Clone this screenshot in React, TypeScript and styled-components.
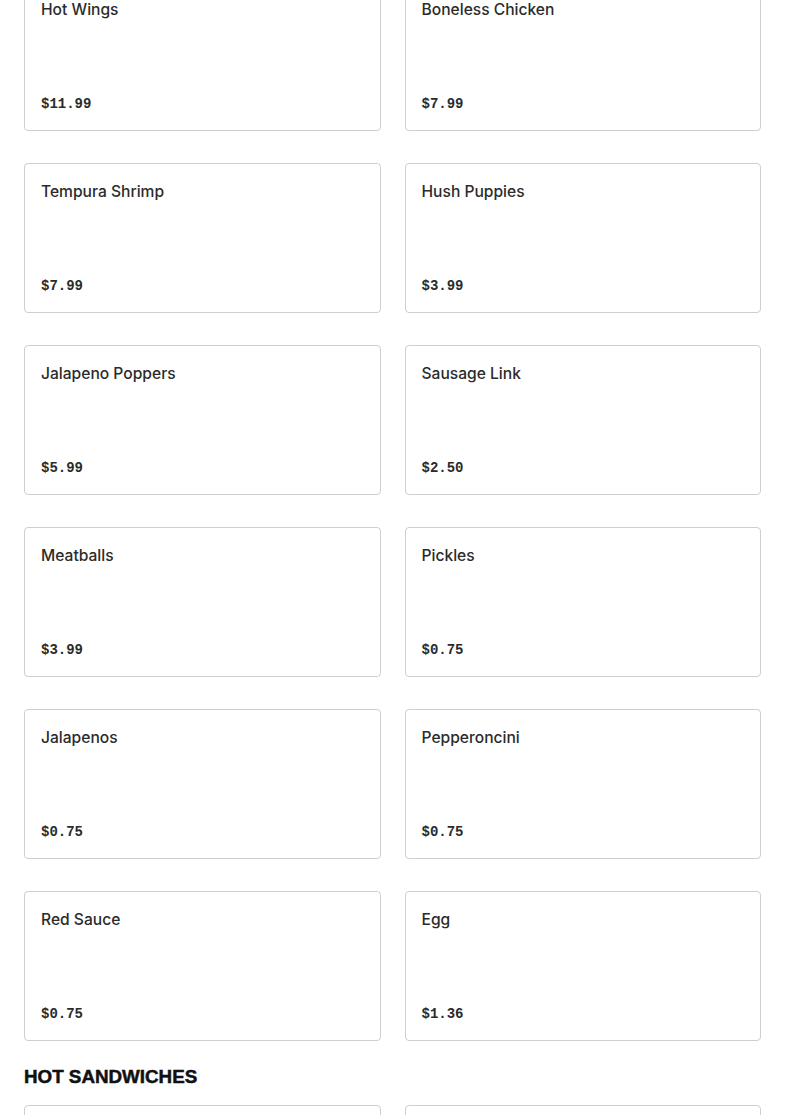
import React from "react";
import styled, { createGlobalStyle } from "styled-components";

const Global = createGlobalStyle`
  html, body { margin: 0; padding: 0; background: #fff; }
  body { font-family: Inter, "Noto Sans", sans-serif; color: #2a2a2a; }
`;

const Page = styled.div`
  padding: 0 24px;
  margin-top: -19px;
`;

const Grid = styled.div`
  display: grid;
  grid-template-columns: 1fr 1fr;
  gap: 32px 24px;
`;

const Card = styled.div`
  height: 150px;
  box-sizing: border-box;
  border: 1px solid #cfcfcf;
  border-radius: 4px;
  padding: 17px 16px 16px;
  display: flex;
  flex-direction: column;
  justify-content: space-between;
`;

const Title = styled.div`
  font-size: 15.6px;
  font-weight: 500;
  line-height: 22px;
  color: #2b2b2b;
`;

const Price = styled.div`
  font-family: "Liberation Mono", "DejaVu Sans Mono", monospace;
  font-weight: 700;
  font-size: 14px;
  line-height: 20px;
  color: #2b2b2b;
`;

const Heading = styled.h2`
  margin: 24px 0 16px;
  font-family: "Liberation Sans", Arial, sans-serif;
  font-weight: 900;
  font-size: 18.8px;
  line-height: 24px;
  color: #111;
  text-transform: uppercase;
  -webkit-text-stroke: 0.5px #111;
`;

const items: [string, string][] = [
  ["Hot Wings", "$11.99"],
  ["Boneless Chicken", "$7.99"],
  ["Tempura Shrimp", "$7.99"],
  ["Hush Puppies", "$3.99"],
  ["Jalapeno Poppers", "$5.99"],
  ["Sausage Link", "$2.50"],
  ["Meatballs", "$3.99"],
  ["Pickles", "$0.75"],
  ["Jalapenos", "$0.75"],
  ["Pepperoncini", "$0.75"],
  ["Red Sauce", "$0.75"],
  ["Egg", "$1.36"],
];

export default function App() {
  return (
    <Page>
      <Global />
      <Grid>
        {items.map(([n, p]) => (
          <Card key={n}>
            <Title>{n}</Title>
            <Price>{p}</Price>
          </Card>
        ))}
      </Grid>
      <Heading>Hot Sandwiches</Heading>
      <Grid>
        <Card />
        <Card />
      </Grid>
    </Page>
  );
}
